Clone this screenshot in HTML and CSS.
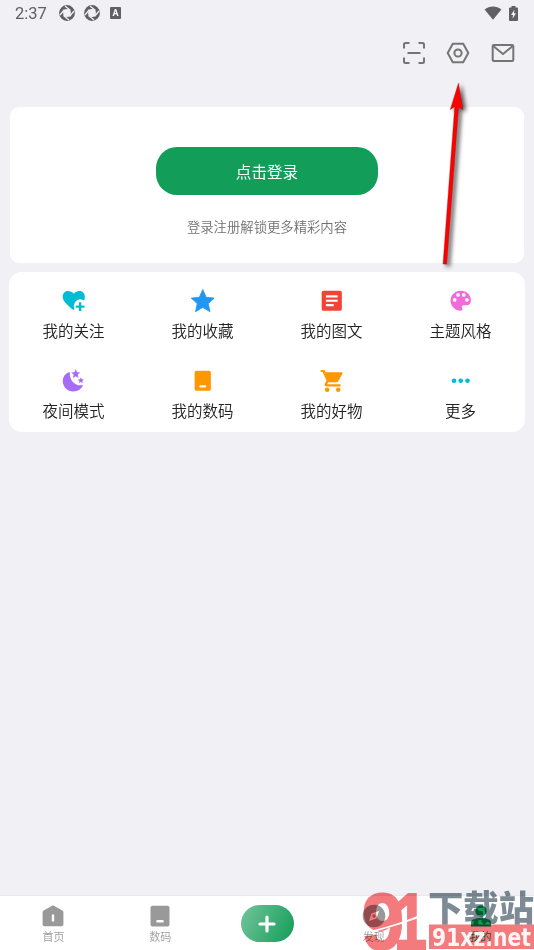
FILE: index.html
```html
<!DOCTYPE html>
<html lang="zh-CN">
<head>
<meta charset="utf-8">
<title>我的</title>
<link rel="stylesheet" href="styles.css">
</head>
<body>
<div class="app">
  <header class="status">
    <span class="clock">2:37</span>
    <svg class="ring" viewBox="0 0 16 16"><circle cx="8" cy="8" r="5.900" fill="none" stroke="#606063" stroke-width="4"/><path d="M6 1L11.500 5.500M15 6L10.500 11.500M10 15L4.500 10.500M1 10L5.500 4.500" stroke="#f0f0f5" stroke-width="1.300"/></svg>
    <svg class="ring" viewBox="0 0 16 16"><circle cx="8" cy="8" r="5.900" fill="none" stroke="#606063" stroke-width="4"/><path d="M6 1L11.500 5.500M15 6L10.500 11.500M10 15L4.500 10.500M1 10L5.500 4.500" stroke="#f0f0f5" stroke-width="1.300"/></svg>
    <span class="badge">A</span>
    <svg class="wifi" viewBox="0 0 18 14"><path d="M9 13.700L.6 3.600C5.500-.6 12.500-.6 17.400 3.600Z" fill="#606063"/></svg>
    <svg class="battery" viewBox="0 0 9 15"><path d="M2.500 0h4v1.500H8q1 0 1 1V14q0 1-1 1H1q-1 0-1-1V2.500q0-1 1-1h1.500z" fill="#606063"/><path d="M5.500 3.500L2 9h2l-.4 3.800L7 7.300H5z" fill="#f0f0f5"/></svg>
  </header>
  <div class="toolbar">
    <svg viewBox="0 0 24 24"><path d="M2 7.500V3.500Q2 2 3.500 2H7.500M16.500 2h4Q22 2 22 3.500v4M22 16.500v4Q22 22 20.500 22h-4M7.500 22h-4Q2 22 2 20.500v-4M5.500 12h13"/></svg>
    <svg viewBox="0 0 24 24"><path d="M6.800 2.700h10.400L22.300 12l-5.100 9.300H6.800L1.700 12z"/><circle cx="12" cy="12" r="3.600"/></svg>
    <svg viewBox="0 0 24 24"><rect x="1.700" y="4" width="20.600" height="16" rx="1"/><path d="M2.500 5.300L12 13l9.500-7.700"/></svg>
  </div>
  <section class="card login">
    <button class="login-button">点击登录</button>
    <p class="hint">登录注册解锁更多精彩内容</p>
  </section>
  <section class="card grid">
    <div class="item"><svg viewBox="0 0 24 24"><path fill="#00bcd4" d="M11.500 21.500C4.500 15.500.7 12.100.7 7.900c0-6.500 7.600-7.700 11.300-3C15.700.2 23.300 1.400 23.300 7.900q0 2-.8 3.800-6-3.200-9.400 2-1.800 3.300-.5 7z"/><path stroke="#00bcd4" stroke-width="2.500" d="M18.500 13.500v9M14 18h9"/></svg><span>我的关注</span></div>
    <div class="item"><svg viewBox="0 0 24 24"><path fill="#2196f3" stroke="#2196f3" stroke-width=".8" stroke-linejoin="round" d="M12 .5l3.500 8 8.300.8-6.200 5.600 1.800 8.300L12 18.900l-7.400 4.300 1.800-8.300L.2 9.300l8.300-.8z"/></svg><span>我的收藏</span></div>
    <div class="item"><svg viewBox="0 0 24 24"><rect x="1.700" y="1.700" width="20.600" height="20.600" rx="2" fill="#f44336"/><path d="M6 7.500h12M6 12h12M6 16.500h8" stroke="#fff" stroke-width="2.200"/></svg><span>我的图文</span></div>
    <div class="item"><svg viewBox="0 0 24 24"><path fill="#f06ad8" d="M12 1.800C6 1.800 1.600 6.300 1.600 12S6.300 22.200 12 22.200c1.800 0 2.200-1.600 1.400-2.900-.9-1.500 0-2.700 1.600-2.700h3c2.700 0 4.400-2.200 4.400-4.900C22.400 6 18 1.800 12 1.800z"/><g fill="#fff"><circle cx="5.800" cy="11" r="1.900"/><circle cx="9.200" cy="6" r="1.900"/><circle cx="15" cy="6" r="1.900"/><circle cx="18.300" cy="11" r="1.900"/></g></svg><span>主题风格</span></div>
    <div class="item"><svg viewBox="0 0 24 24"><path fill="#a76bfa" d="M8 3C3.500 4 .8 8 .8 12.300.8 18.300 5.600 23 11.500 23c4.600 0 8.500-2.500 10-6.600C13.500 18.200 7.200 11.500 8 3z"/><path fill="#a76bfa" d="M14 0l1.300 3.200 3.400.3-2.600 2.200.8 3.400L14 7.300l-2.900 1.800.8-3.400-2.600-2.200 3.400-.3zM19.300 8.500l.9 2 2.300.2-1.800 1.500.6 2.300-2-1.300-2 1.300.6-2.300-1.800-1.500 2.300-.2z"/></svg><span>夜间模式</span></div>
    <div class="item"><svg viewBox="0 0 24 24"><rect x="3.700" y="1.700" width="16.600" height="20.600" rx="2" fill="#ff9800"/><path d="M9.500 17.700h5" stroke="#fff" stroke-width="2.200" stroke-linecap="round"/></svg><span>我的数码</span></div>
    <div class="item"><svg viewBox="0 0 24 24"><path fill="#ff9800" d="M.7.900h3.900l1.100 2.300h16.500q1.300.2.800 1.300L18.600 12.400q-.6 1.100-1.800 1.100H8.500L7.400 15.600H21v2.200H6.700c-1.700 0-2.500-1.400-1.800-2.700l1.700-3L2.800 3H.7z"/><circle cx="7.300" cy="21.200" r="2.300" fill="#ff9800"/><circle cx="18.600" cy="21.200" r="2.300" fill="#ff9800"/></svg><span>我的好物</span></div>
    <div class="item"><svg viewBox="0 0 24 24" fill="#00bcd4"><circle cx="5.100" cy="12" r="2.400"/><circle cx="12" cy="12" r="2.400"/><circle cx="18.900" cy="12" r="2.400"/></svg><span>更多</span></div>
  </section>
  <nav class="tabs">
    <div class="tab"><svg viewBox="0 0 24 24"><path fill="#999" d="M12 1.200L21.400 6.500q1 .6 1 1.700V20.500q0 1.800-1.800 1.800H3.400q-1.800 0-1.800-1.800V8.200q0-1.100 1-1.700z"/><path d="M12 11.500v5" stroke="#fff" stroke-width="2.400" stroke-linecap="round"/></svg><span>首页</span></div>
    <div class="tab"><svg viewBox="0 0 24 24"><rect x="2.500" y="1.700" width="19" height="20.800" rx="2" fill="#999"/><path d="M9.500 17.200h5" stroke="#fff" stroke-width="2.400" stroke-linecap="round"/></svg><span>数码</span></div>
    <div class="tab"><div class="add"><svg viewBox="0 0 18 18"><path d="M9 2v14M2 9h14" stroke="#fff" stroke-width="3.200" stroke-linecap="round"/></svg></div></div>
    <div class="tab"><svg viewBox="0 0 24 24"><circle cx="12" cy="12" r="11.300" fill="#999"/><path d="M17 7l-2.500 7.500L7 17l2.500-7.500z" fill="#fff"/><circle cx="12" cy="12" r="1.700" fill="#999"/></svg><span>发现</span></div>
    <div class="tab active"><svg viewBox="0 0 24 24"><circle cx="12" cy="7" r="5.700" fill="#129d58"/><path fill="#129d58" d="M2 22.500v-4c0-3 4-4.500 10-4.500s10 1.500 10 4.500v4z"/></svg><span>我的</span></div>
  </nav>
</div>
<svg class="arrow" width="60" height="210" viewBox="430 70 60 210"><path fill="#f00" stroke="#742020" stroke-width=".3" d="M458.500 83L463 109.700 458.700 107 446.800 264.300 443 264 454.700 106.800 450.200 109.700z"/></svg>
<svg class="watermark tint" width="174" height="64" viewBox="360 886 174 64">
  <text class="logo" x="362" y="949" font-size="80" textLength="42" lengthAdjust="spacingAndGlyphs">9</text>
  <text class="logo" x="394" y="949" font-size="79" textLength="33" lengthAdjust="spacingAndGlyphs">1</text>
  <rect x="429" y="924.500" width="105" height="24.500" fill="#f37b7e"/>
</svg>
<svg class="watermark" width="174" height="64" viewBox="360 886 174 64">
  <path d="M374 930Q399 924 426 912.500V915.500Q400 925 374 932z" fill="#fff"/>
  <text class="domain" x="432" y="946" font-size="25.500" textLength="99" lengthAdjust="spacingAndGlyphs">91xz.net</text>
</svg>
<svg class="watermark tint" width="174" height="64" viewBox="360 886 174 64">
  <text class="site" x="428" y="920.500" font-size="35" textLength="106" lengthAdjust="spacingAndGlyphs">下载站</text>
</svg>
</body>
</html>
```
FILE: styles.css
```css
* { box-sizing: border-box; }
body {
  margin: 0;
  background: #f0f0f5;
  font-family: "Noto Sans CJK SC", sans-serif;
  font-weight: 350;
  color: #222;
}
.app { height: 950px; display: flex; flex-direction: column; overflow: hidden; }
.status { height: 28px; display: flex; align-items: center; padding: 0 16px 2px 15px; }
.clock { font: 400 16.5px/26px Roboto, sans-serif; color: #606063; width: 44px; padding-top: 2px; }
.ring { width: 16px; height: 16px; margin-right: 9px; }
.badge {
  width: 11px; height: 12px; margin-left: 1px; border-radius: 1px;
  background: #606063; color: #fff; text-align: center;
  font: 700 9px/12px Roboto, sans-serif;
}
.wifi { width: 18px; height: 14px; margin-left: auto; }
.battery { width: 9px; height: 15px; margin-left: 7px; }
.toolbar { height: 50px; display: flex; justify-content: flex-end; align-items: center; gap: 20.600px; padding: 0 19px 0 0; }
.toolbar svg { width: 24px; height: 24px; fill: none; stroke: #757575; stroke-width: 2; }
.card { background: #fff; }
.login {
  margin: 29px 10px 0; height: 156px; padding-top: 40px; border-radius: 9px;
  display: flex; flex-direction: column; align-items: center;
}
.login-button {
  width: 222px; height: 48px; border: 0; padding: 0; border-radius: 21px;
  background: #129d58; color: #fff; font: 400 15.600px/48px "Noto Sans CJK SC", sans-serif;
}
.hint { margin: 22px 0 0; font-size: 13.350px; line-height: 20px; color: #707070; }
.grid {
  margin: 9px 9px 0; height: 160px; border-radius: 13px;
  display: grid; grid-template-columns: repeat(4, 1fr); grid-template-rows: 80px 80px;
}
.item { display: flex; flex-direction: column; align-items: center; padding-top: 17px; font-size: 15.500px; line-height: 24px; }
.item svg { width: 23.500px; height: 23.500px; margin-bottom: 5.500px; }
.item span { height: 24px; }
.tabs { margin-top: auto; height: 54px; background: #fff; display: flex; box-shadow: 0 -1px 1px rgba(0, 0, 0, .03); }
.tab { flex: 1; display: flex; flex-direction: column; align-items: center; padding-top: 8px; font-size: 11px; line-height: 16px; color: #999; }
.tab svg { width: 24px; height: 24px; }
.tab.active { color: #129d58; }
.add {
  width: 53px; height: 37px; margin: 1px 0 0 1px; border-radius: 18.500px; display: flex;
  align-items: center; justify-content: center; background: linear-gradient(115deg, #74c49c, #129d58);
}
.add svg { width: 18px; height: 18px; }
.arrow { position: absolute; left: 430px; top: 70px; filter: drop-shadow(3px 2px 2px rgba(0, 0, 0, .65)); }
.watermark { position: absolute; left: 360px; top: 886px; }
.tint { mix-blend-mode: multiply; }
.logo { fill: #f37b7e; stroke: #f37b7e; stroke-width: 2; font-family: "Liberation Sans", sans-serif; font-weight: 700; }
.site { fill: #7d8b95; font-family: "Noto Sans CJK SC", sans-serif; font-weight: 900; }
.domain { fill: #fff; fill-opacity: .92; font-family: "DejaVu Sans", sans-serif; font-weight: 700; }
```
